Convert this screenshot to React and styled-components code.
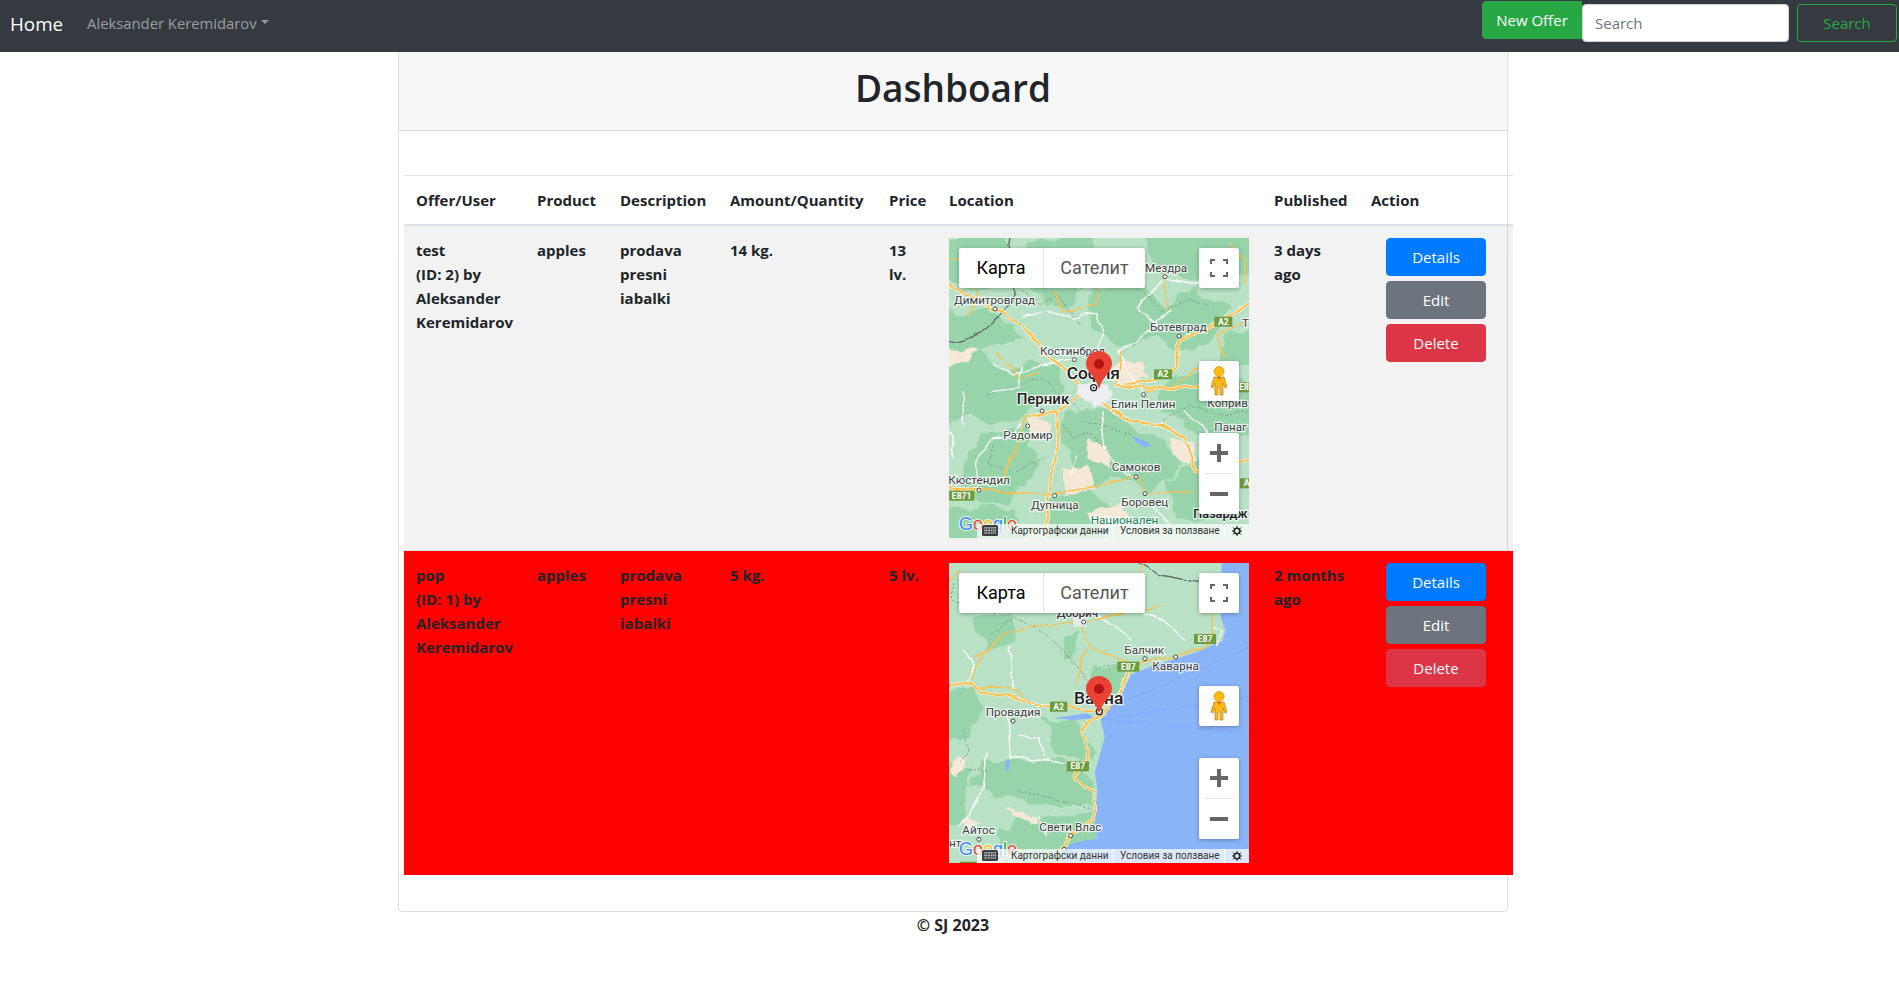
import styled, { createGlobalStyle } from "styled-components";

const GlobalStyle = createGlobalStyle`
  * { box-sizing: border-box; }
  body {
    margin: 0;
    background: #fff;
    color: #212529;
    font-family: "Open Sans", "Liberation Sans", sans-serif;
    font-size: 15px;
    line-height: 24px;
  }
`;

const Navbar = styled.nav`
  display: flex;
  align-items: flex-start;
  height: 52px;
  padding: 4px 2px 0 10px;
  background: #343a40;
`;
const Brand = styled.a`
  margin-top: 5px;
  color: #fff;
  font-size: 18.800px;
  line-height: 30px;
`;
const NavLink = styled.a`
  display: flex;
  align-items: center;
  margin: 7px 0 0 24px;
  color: rgba(255, 255, 255, 0.5);
  font-size: 14.800px;
  &::after {
    content: "";
    margin-left: 4px;
    margin-bottom: 3px;
    border-top: 4.5px solid rgba(255, 255, 255, 0.5);
    border-left: 4.5px solid transparent;
    border-right: 4.5px solid transparent;
  }
`;
const NavActions = styled.div`
  display: flex;
  align-items: flex-start;
  margin-left: auto;
`;
const Button = styled.button`
  display: block;
  width: ${(p) => p.$width || 100}px;
  height: 38px;
  padding: 0;
  border: 1px solid ${(p) => p.$color};
  border-radius: 4px;
  background: ${(p) => (p.$outline ? "transparent" : p.$color)};
  color: ${(p) => (p.$outline ? p.$color : "#fff")};
  font-family: inherit;
  font-size: 15px;
`;
const NewOffer = styled(Button)`
  margin-top: -3px;
  border-radius: 4px 0 0 4px;
`;
const SearchInput = styled.input`
  width: 207px;
  height: 38px;
  margin-right: 8px;
  padding: 0 12px;
  border: 1px solid #ced4da;
  border-radius: 4px;
  font-family: inherit;
  font-size: 15px;
  &::placeholder {
    color: #6c757d;
    opacity: 1;
  }
`;

const Card = styled.section`
  width: 1110px;
  margin: 0 auto 0 398px;
  border: 1px solid rgba(0, 0, 0, 0.125);
  border-top: 0;
  border-radius: 0 0 4px 4px;
`;
const CardHeader = styled.header`
  display: flex;
  align-items: center;
  justify-content: center;
  height: 79px;
  padding-bottom: 7px;
  border-bottom: 1px solid rgba(0, 0, 0, 0.125);
  background: #f7f7f7;
`;
const Title = styled.h1`
  margin: 0;
  font-size: 37px;
  font-weight: 600;
  line-height: 48px;
`;
const CardBody = styled.div`
  padding: 44px 0 36px 5px;
`;
const Table = styled.table`
  width: 1109px;
  table-layout: fixed;
  border-collapse: collapse;
  font-weight: 700;
`;
const HeadCell = styled.th`
  width: ${(p) => p.$width}px;
  padding: 12px;
  border-top: 1px solid #dee2e6;
  border-bottom: 2px solid #dee2e6;
  text-align: left;
  font-size: 15px;
`;
const Row = styled.tr`
  background: ${(p) => (p.$expired ? "#ff0000" : "rgba(0, 0, 0, 0.05)")};
`;
const Cell = styled.td`
  padding: 12px;
  border-top: 1px solid #dee2e6;
  vertical-align: top;
  font-size: 15px;
`;
const Actions = styled.div`
  display: flex;
  flex-direction: column;
  gap: 5px;
  padding-left: 15px;
`;
const Footer = styled.footer`
  padding: 1px 0 0 7px;
  text-align: center;
  font-size: 16px;
  font-weight: 700;
`;

const MapBox = styled.div`
  position: relative;
  width: 300px;
  height: 300px;
  overflow: hidden;
  font-family: Roboto, "Liberation Sans", sans-serif;
  font-weight: 400;
`;
const MapArt = styled.svg`
  display: block;
  width: 300px;
  height: 300px;
`;
const MapType = styled.div`
  position: absolute;
  top: 10px;
  left: 10px;
  display: flex;
  height: 40px;
  border-radius: 2px;
  background: #fff;
  box-shadow: 0 1px 4px rgba(0, 0, 0, 0.3);
  font-size: 18px;
  line-height: 40px;
`;
const MapTab = styled.div`
  width: ${(p) => p.$width}px;
  text-align: center;
  color: ${(p) => (p.$active ? "#000" : "#565656")};
  border-left: ${(p) => (p.$active ? "0" : "1px solid #e6e6e6")};
`;
const MapControl = styled.div`
  position: absolute;
  top: ${(p) => p.$top}px;
  right: 10px;
  display: flex;
  flex-direction: column;
  align-items: center;
  justify-content: center;
  width: 40px;
  height: ${(p) => p.$height || 40}px;
  border-radius: 2px;
  background: #fff;
  box-shadow: 0 1px 4px rgba(0, 0, 0, 0.3);
`;
const ZoomButton = styled.svg`
  display: block;
  width: 40px;
  height: 40px;
`;
const ZoomRule = styled.div`
  width: 30px;
  height: 1px;
  background: #e6e6e6;
`;
const Pin = styled.svg`
  position: absolute;
  top: 113px;
  left: 137px;
  width: 26px;
  height: 38px;
`;
const GoogleMark = styled.svg`
  position: absolute;
  left: 8px;
  bottom: 0;
  width: 64px;
  height: 26px;
`;
const Keyboard = styled.svg`
  position: absolute;
  left: 33px;
  bottom: 2px;
  width: 16px;
  height: 11px;
`;
const Attribution = styled.div`
  position: absolute;
  right: 0;
  bottom: 0;
  display: flex;
  align-items: center;
  height: 14px;
  padding-left: 28px;
  background: rgba(255, 255, 255, 0.7);
  color: #333;
  font-size: 10px;
  line-height: 14px;
  white-space: nowrap;
`;
const AttributionItem = styled.span`
  width: ${(p) => p.$width}px;
  height: 14px;
  padding-left: 6px;
  border-right: 1px solid rgba(255, 255, 255, 0.9);
`;
const BugIcon = styled.svg`
  display: block;
  width: 10px;
  height: 10px;
  margin: 0 7px;
`;

const MapText = styled.text`
  font-family: Roboto, "Liberation Sans", sans-serif;
  font-weight: ${(p) => p.$weight || 400};
  fill: ${(p) => p.$color || "#3c4043"};
  stroke: rgba(255, 255, 255, 0.8);
  stroke-width: 7px;
  paint-order: stroke;
`;
const ShieldText = styled.text`
  font-family: Roboto, "Liberation Sans", sans-serif;
  font-size: 26px;
  font-weight: 700;
  fill: #fff;
  text-anchor: middle;
`;
const LogoText = styled.text`
  font-family: "Liberation Sans", sans-serif;
  font-size: 18px;
  stroke: rgba(255, 255, 255, 0.8);
  stroke-width: 2px;
  paint-order: stroke;
`;

const Land = { light: "#b8e1c5", dark: "#97d4aa", sand: "#f5e8d6", sea: "#8ab4f8", road: "#fbc04e" };

// wavy edges, so that the hand drawn polygons read as terrain and not as shapes
function Wiggle({ id }) {
  return (
    <defs>
      <filter id={`${id}-land`} filterUnits="userSpaceOnUse" x="0" y="0" width="1000" height="1000">
        <feTurbulence type="fractalNoise" baseFrequency="0.014" numOctaves="3" seed="4" />
        <feDisplacementMap in="SourceGraphic" scale="60" xChannelSelector="R" yChannelSelector="G" />
        <feGaussianBlur stdDeviation="1.500" />
      </filter>
      <filter id={`${id}-road`} filterUnits="userSpaceOnUse" x="0" y="0" width="1000" height="1000">
        <feTurbulence type="fractalNoise" baseFrequency="0.02" numOctaves="2" seed="9" />
        <feDisplacementMap in="SourceGraphic" scale="22" xChannelSelector="R" yChannelSelector="G" />
      </filter>
    </defs>
  );
}

function Label({ x, y, size = 35, weight, color, children }) {
  return <MapText x={x} y={y} fontSize={size} $weight={weight} $color={color}>{children}</MapText>;
}

function Shield({ x, y, w = 54, children }) {
  return (
    <g>
      <rect x={x} y={y} width={w} height={30} fill="#6d9c3f" />
      <ShieldText x={x + w / 2} y={y + 24}>{children}</ShieldText>
    </g>
  );
}

function Dot({ x, y }) {
  return <circle cx={x} cy={y} r="6" fill="#fff" stroke="#4a4a4a" strokeWidth="3" />;
}

function Roads({ id, main = [], minor = [], white = [], dashed = [], border = [] }) {
  return (
    <g fill="none" strokeLinejoin="round" strokeLinecap="round" filter={`url(#${id}-road)`}>
      {dashed.map((d) => <path key={d} d={d} stroke="#7d9a88" strokeWidth="3" strokeDasharray="4 8" />)}
      {border.map((d) => <path key={d} d={d} stroke="#62686a" strokeWidth="4" />)}
      {white.map((d) => <path key={d} d={d} stroke="#fff" strokeWidth="4" />)}
      {minor.map((d) => <path key={d} d={d} stroke={Land.road} strokeWidth="4" />)}
      {main.map((d) => (
        <g key={d}>
          <path d={d} stroke="#fff" strokeWidth="10" />
          <path d={d} stroke={Land.road} strokeWidth="6.500" />
        </g>
      ))}
    </g>
  );
}

function SofiaArt() {
  return (
    <MapArt viewBox="57 39 900 900">
      <Wiggle id="sofia" />
      <rect x="57" y="39" width="900" height="900" fill={Land.light} />
      <g filter="url(#sofia-land)">
        <g fill={Land.dark}>
          <path d="M480 190 L640 170 L700 240 L800 190 L900 250 L830 350 L740 370 L650 340 L560 370 L490 310Z" />
          <path d="M20 410 L150 380 L230 440 L320 400 L400 430 L390 510 L280 570 L190 600 L100 570 L20 620Z" />
          <path d="M420 560 L540 540 L600 610 L700 640 L750 720 L660 800 L560 740 L500 790 L430 730 L390 640Z" />
          <path d="M150 640 L280 600 L330 700 L270 810 L170 840 L100 790 L120 700Z" />
          <path d="M700 470 L860 440 L1000 500 L1000 620 L860 650 L760 600 L680 540Z" />
          <path d="M290 60 L480 20 L500 170 L400 250 L300 190Z" />
          <path d="M20 250 L200 270 L270 340 L150 380 L20 360Z" />
          <path d="M700 770 L800 700 L920 750 L870 870 L740 890Z" />
          <path d="M360 820 L480 800 L560 870 L510 960 L340 960Z" />
          <path d="M20 840 L240 850 L300 960 L20 960Z" />
          <path d="M60 40 L230 20 L280 150 L160 190 L30 160Z" />
          <path d="M650 40 L960 20 L960 150 L800 170 L680 130Z" />
          <path d="M880 320 L990 310 L980 420 L880 420Z" />
        </g>
        <g fill={Land.sand}>
          <path d="M540 420 L630 410 L660 450 L590 475 L550 460Z" />
          <path d="M465 650 L530 655 L540 725 L475 705Z" />
          <path d="M380 740 L475 725 L495 795 L415 810Z" />
          <path d="M715 635 L795 655 L805 715 L735 705Z" />
          <path d="M45 365 L140 375 L130 415 L45 415Z" />
          <path d="M295 585 L375 595 L365 645 L295 630Z" />
          <path d="M475 855 L565 840 L595 885 L505 910Z" />
        </g>
        <path d="M450 470 L530 465 L545 530 L490 545 L450 510Z" fill="#eceef1" />
        <path d="M612 635 L635 640 L655 682 L625 675Z" fill={Land.sea} />
      </g>
      <Roads
        id="sofia"
        border={["M50 345 L85 352 L125 342 L215 270 L255 205 L235 35"]}
        dashed={[
          "M170 505 L250 490 L340 460 L430 540 L480 590 L610 630",
          "M190 660 L170 720 L250 740 L340 700",
          "M640 200 L700 260 L780 220 L840 240",
          "M250 170 L330 240 L380 210 L450 300",
          "M700 590 L780 540 L860 570 L957 560",
          "M400 600 L430 640 L470 620 L540 680",
        ]}
        white={[
          "M100 500 L100 600 M270 430 L265 490 L180 500",
          "M280 270 L360 260 L430 280 L500 260 L520 330 L500 390",
          "M430 400 L330 420 L250 450 L190 420",
          "M520 560 L510 620 L540 700 L610 760",
          "M640 510 L600 450 L560 380 L620 350 L720 260",
          "M270 600 L250 640 L190 640 L140 700 L140 790",
          "M700 320 L620 250 L710 160 L820 180",
          "M60 620 L75 700 M760 560 L820 600 L880 680",
          "M440 690 L420 750 M650 830 L720 900",
        ]}
        minor={[
          "M120 270 L140 200 L100 130",
          "M370 200 L400 260 L500 240 L510 170 L570 80",
          "M290 570 L260 670 L215 760",
          "M150 795 L370 810 L610 755",
          "M620 755 L645 805 L790 800",
          "M200 385 L270 460 L330 440",
          "M880 400 L860 330 L950 290",
          "M700 120 L710 260 M560 480 L570 380",
          "M650 500 L740 480 L800 430 L900 440",
          "M60 100 L110 110 M900 60 L950 110 L940 180",
        ]}
        main={[
          "M560 482 L680 465 L740 425 L748 345 L860 295 L970 225",
          "M50 180 L190 250 L270 295 L350 390 L445 470",
          "M445 515 L380 562 L388 640 L360 790 L345 930",
          "M520 535 L600 590 L700 600 L760 640 L800 740 L970 700",
          "M300 570 L380 562",
          "M50 790 L150 795",
          "M560 480 L640 490 L720 490 L970 470",
        ]}
      />
      <Shield x={853} y={275}>A2</Shield>
      <Shield x={672} y={433}>A2</Shield>
      <Shield x={57} y={797} w={76}>E871</Shield>
      <Shield x={925} y={472} w={50}>E87</Shield>
      <Shield x={930} y={760} w={40}>A</Shield>
      <Dot x={705} y={155} /><Dot x={195} y={252} /><Dot x={747} y={333} />
      <Dot x={433} y={404} /><Dot x={336} y={558} /><Dot x={293} y={603} />
      <Dot x={641} y={509} /><Dot x={618} y={756} /><Dot x={147} y={795} />
      <Dot x={374} y={812} /><Dot x={645} y={806} />
      <circle cx="491" cy="488" r="9" fill="#fff" stroke="#222" strokeWidth="4" />
      <circle cx="491" cy="488" r="3" fill="#222" />
      <Label x={72} y={238}>Димитровград</Label>
      <Label x={645} y={140}>Мездра</Label>
      <Label x={660} y={318}>Ботевград</Label>
      <Label x={936} y={307}>Т</Label>
      <Label x={330} y={390}>Костинброд</Label>
      <Label x={410} y={463} size={52} weight={500} color="#202124">София</Label>
      <Label x={260} y={538} size={45} weight={500} color="#202124">Перник</Label>
      <Label x={543} y={548}>Елин Пелин</Label>
      <Label x={832} y={546}>Коприв</Label>
      <Label x={853} y={618}>Панаг</Label>
      <Label x={220} y={642}>Радомир</Label>
      <Label x={545} y={738}>Самоков</Label>
      <Label x={55} y={778}>Кюстендил</Label>
      <Label x={303} y={852}>Дупница</Label>
      <Label x={574} y={844}>Боровец</Label>
      <Label x={790} y={878} size={38} weight={500} color="#202124">Пазардж</Label>
      <Label x={482} y={898} color="#1b7f5c">Национален</Label>
    </MapArt>
  );
}

function VarnaArt() {
  return (
    <MapArt viewBox="57 39 900 900">
      <Wiggle id="varna" />
      <rect x="57" y="39" width="900" height="900" fill={Land.light} />
      <g filter="url(#varna-land)">
        <g fill={Land.dark}>
          <path d="M120 190 L240 190 L260 280 L180 300 L130 250Z" />
          <path d="M400 260 L430 250 L440 310 L400 320Z" />
          <path d="M490 350 L580 340 L590 400 L540 450 L460 440Z" />
          <path d="M20 410 L130 420 L150 500 L110 570 L20 560Z" />
          <path d="M340 510 L450 520 L490 640 L420 620 L380 600Z" />
          <path d="M160 640 L400 620 L490 690 L490 770 L320 760 L200 740 L130 700Z" />
          <path d="M20 640 L130 650 L110 800 L20 830Z" />
          <path d="M200 830 L340 800 L500 790 L500 865 L420 880 L400 960 L220 960Z" />
        </g>
        <g fill={Land.sand}>
          <path d="M70 630 L105 640 L85 670 L65 660Z" />
          <path d="M240 785 L330 800 L330 825 L260 810Z" />
          <path d="M100 800 L160 810 L130 830Z" />
        </g>
      </g>
      <path d="M875 30 L872 200 L886 240 L878 272 L800 305 L745 325 L690 340 L630 362 L602 375 L570 445 L530 480 L512 510 L524 560 L508 620 L495 665 L502 720 L495 800 L502 865 L425 880 L400 905 L400 960 L970 960 L970 30Z" fill={Land.sea} />
      <path d="M370 505 L470 490 L500 505 L430 510Z" fill={Land.sea} />
      <path d="M228 628 L240 630 L235 665 L225 660Z" fill={Land.sea} />
      <g fill="none" stroke="#6fa2f5" strokeWidth="2" strokeDasharray="14 6">
        <path d="M515 508 L957 440" />
        <path d="M515 508 L957 550" />
        <path d="M520 480 L760 380 L957 290" />
      </g>
      <Roads
        id="varna"
        border={["M620 30 L690 72 L810 95"]}
        dashed={[
          "M190 250 L250 200 L340 250 L420 320 L470 390",
          "M70 100 L70 150 L130 170 L200 190",
          "M100 540 L120 600 L80 640 M120 660 L180 660",
          "M500 360 L550 345 L590 380",
          "M260 720 L420 760 L490 780",
        ]}
        white={[
          "M100 300 L130 350 L110 390",
          "M240 290 L250 420 M235 500 L240 620 L320 630 L430 640",
          "M270 560 L330 560 L340 620",
          "M640 190 L700 210 L760 270 M850 230 L880 240 L860 290",
          "M170 610 L160 720 L90 830 M330 800 L350 860",
          "M500 190 L560 230 L600 270",
        ]}
        minor={[
          "M130 330 L230 250 L300 230 L440 220 L620 180 L700 170",
          "M115 390 L160 310 L230 250",
          "M455 230 L480 290 L540 320 L610 340",
          "M470 300 L430 410",
          "M845 190 L850 280 L740 320 L660 330 L600 350",
          "M60 90 L90 60 M640 39 L620 90",
          "M130 420 L230 410 L290 450",
        ]}
        main={[
          "M50 405 L120 398 L150 428 L240 440 L320 468 L440 470 L500 485",
          "M520 490 L470 525 L455 545 L480 600 L470 630 L430 680 L490 730 L490 810 L420 855 L390 900",
          "M590 370 L560 440 L520 485",
        ]}
      />
      <rect x="430" y="200" width="40" height="30" fill="#e6e8ea" />
      <Shield x={360} y={455} w={52}>A2</Shield>
      <Shield x={562} y={335} w={66}>E87</Shield>
      <Shield x={792} y={252} w={66}>E87</Shield>
      <Shield x={410} y={634} w={67}>E87</Shield>
      <rect x="90" y="935" width="50" height="4" fill="#6d9c3f" />
      <Dot x={461} y={216} /><Dot x={645} y={326} /><Dot x={737} y={321} />
      <Dot x={249} y={513} /><Dot x={147} y={868} /><Dot x={422} y={857} /><Dot x={402} y={898} />
      <circle cx="508" cy="485" r="9" fill="#fff" stroke="#222" strokeWidth="4" />
      <Label x={380} y={200} weight={500}>Добрич</Label>
      <Label x={583} y={312}>Балчик</Label>
      <Label x={667} y={360}>Каварна</Label>
      <Label x={432} y={462} size={52} weight={500} color="#202124">Варна</Label>
      <Label x={167} y={498}>Провадия</Label>
      <Label x={97} y={852}>Айтос</Label>
      <Label x={328} y={843}>Свети Влас</Label>
      <Label x={57} y={890}>нт</Label>
    </MapArt>
  );
}

function GoogleMap({ Art }) {
  return (
    <MapBox>
      <Art />
      <MapType>
        <MapTab $width={84} $active>Карта</MapTab>
        <MapTab $width={102}>Сателит</MapTab>
      </MapType>
      <MapControl $top={10}>
        <svg width="18" height="18" viewBox="0 0 18 18" fill="#666">
          <path d="M0 0h5v2H2v3H0zM13 0h5v5h-2V2h-3zM0 13h2v3h3v2H0zM16 13h2v5h-5v-2h3z" />
        </svg>
      </MapControl>
      <MapControl $top={123}>
        <svg width="18" height="30" viewBox="0 0 18 30">
          <circle cx="9" cy="5.5" r="5" fill="#fdb813" stroke="#c48a00" strokeWidth="0.6" />
          <path d="M4 11h10l3 10-2 1-2-5v12h-3v-8H8v8H5V17l-2 5-2-1z" fill="#fdb813" stroke="#a98237" strokeWidth="0.7" />
          <path d="M7 11l2 3 2-3z" fill="#d9730d" />
        </svg>
      </MapControl>
      <MapControl $top={195} $height={81}>
        <ZoomButton viewBox="0 0 40 40">
          <path d="M18 11h4v7h7v4h-7v7h-4v-7h-7v-4h7z" fill="#666" />
        </ZoomButton>
        <ZoomRule />
        <ZoomButton viewBox="0 0 40 40">
          <rect x="11" y="18" width="18" height="4" fill="#666" />
        </ZoomButton>
      </MapControl>
      <Pin viewBox="0 0 26 38">
        <path d="M13 0C5.800 0 0 5.600 0 12.600c0 4.400 2 7 4.600 10.200C8 27 11.400 31.500 13 38c1.600-6.500 5-11 8.400-15.200C24 19.600 26 17 26 12.600 26 5.600 20.200 0 13 0z" fill="#ea4335" />
        <circle cx="13" cy="13" r="5" fill="#b31412" />
      </Pin>
      <GoogleMark viewBox="0 0 64 26">
        <LogoText x="2" y="18">
          <tspan fill="#4285f4">G</tspan>
          <tspan fill="#ea4335">o</tspan>
          <tspan fill="#fbbc04">o</tspan>
          <tspan fill="#4285f4">g</tspan>
          <tspan fill="#34a853">l</tspan>
          <tspan fill="#ea4335">e</tspan>
        </LogoText>
      </GoogleMark>
      <Attribution>
        <AttributionItem $width={109}>Картографски данни</AttributionItem>
        <AttributionItem $width={111}>Условия за ползване</AttributionItem>
        <BugIcon viewBox="0 0 10 10">
          <circle cx="5" cy="5" r="2.800" fill="none" stroke="#222" strokeWidth="1.600" />
          <path d="M5 0v2M5 8v2M1 1.500l1.500 1.500M9 1.500L7.500 3M0 5h2M8 5h2M1 8.500L2.500 7M9 8.500L7.500 7" stroke="#222" />
        </BugIcon>
      </Attribution>
      <Keyboard viewBox="0 0 16 11">
        <rect width="16" height="11" rx="1.500" fill="#3c4043" />
        <path d="M2 3h12M2 5.500h12M2 8h12M4 2v7M7 2v7M10 2v7M13 2v7" stroke="#fff" strokeWidth="0.800" strokeDasharray="1.200 1" />
      </Keyboard>
    </MapBox>
  );
}

const columns = [
  ["Offer/User", 121], ["Product", 83], ["Description", 110], ["Amount/Quantity", 159],
  ["Price", 60], ["Location", 325], ["Published", 97], ["Action", 154],
];

const offers = [
  { name: "test", id: 2, amount: "14 kg.", price: "13 lv.", published: "3 days ago", Art: SofiaArt },
  { name: "pop", id: 1, amount: "5 kg.", price: "5 lv.", published: "2 months ago", Art: VarnaArt, expired: true },
];

export default function App() {
  return (
    <>
      <GlobalStyle />
      <Navbar>
        <Brand>Home</Brand>
        <NavLink>Aleksander Keremidarov</NavLink>
        <NavActions>
          <NewOffer $color="#28a745">New Offer</NewOffer>
          <SearchInput placeholder="Search" />
          <Button $color="#28a745" $outline>Search</Button>
        </NavActions>
      </Navbar>
      <Card>
        <CardHeader>
          <Title>Dashboard</Title>
        </CardHeader>
        <CardBody>
          <Table>
            <thead>
              <tr>
                {columns.map(([label, width]) => (
                  <HeadCell key={label} $width={width}>{label}</HeadCell>
                ))}
              </tr>
            </thead>
            <tbody>
              {offers.map((offer) => (
                <Row key={offer.id} $expired={offer.expired}>
                  <Cell>{offer.name}<br />(ID: {offer.id}) by Aleksander Keremidarov</Cell>
                  <Cell>apples</Cell>
                  <Cell>prodava presni iabalki</Cell>
                  <Cell>{offer.amount}</Cell>
                  <Cell>{offer.price}</Cell>
                  <Cell><GoogleMap Art={offer.Art} /></Cell>
                  <Cell>{offer.published}</Cell>
                  <Cell>
                    <Actions>
                      <Button $color="#007bff">Details</Button>
                      <Button $color="#6c757d">Edit</Button>
                      <Button $color="#dc3545">Delete</Button>
                    </Actions>
                  </Cell>
                </Row>
              ))}
            </tbody>
          </Table>
        </CardBody>
      </Card>
      <Footer>© SJ 2023</Footer>
    </>
  );
}
